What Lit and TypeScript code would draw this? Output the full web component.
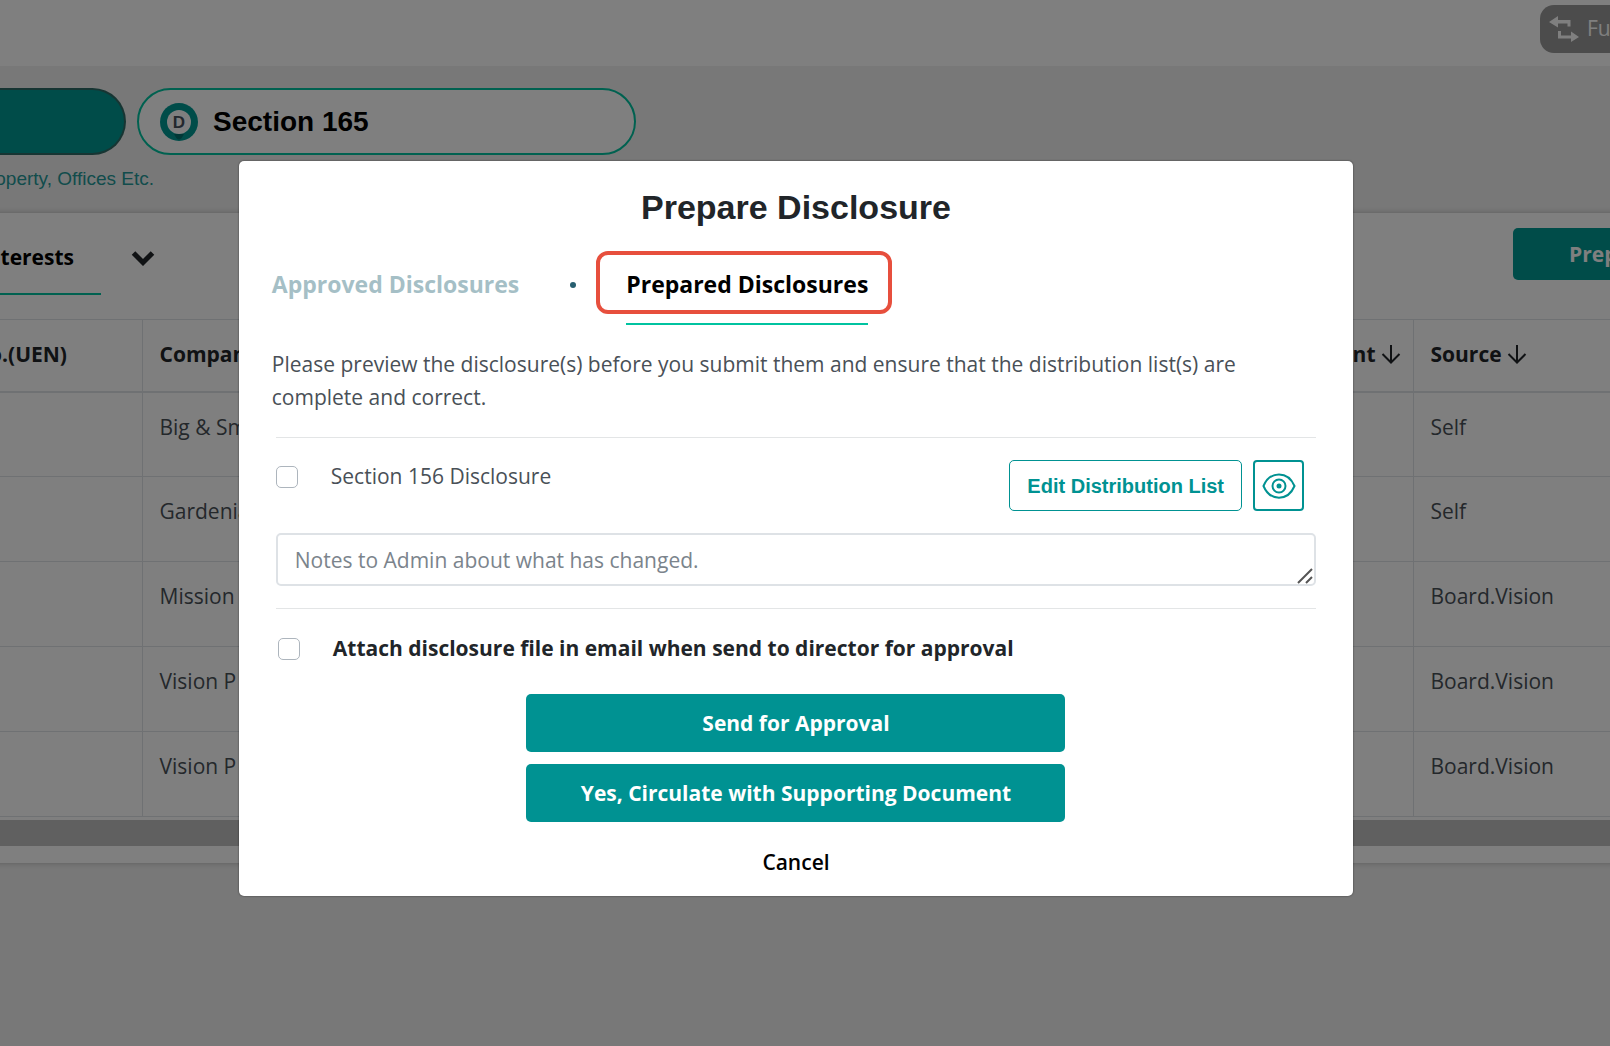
import { LitElement, html, css, svg } from "lit";
import { customElement } from "lit/decorators.js";

interface Row {
  company: string;
  source: string;
}

const ROWS: Row[] = [
  { company: "Big & Small", source: "Self" },
  { company: "Gardenia", source: "Self" },
  { company: "Mission", source: "Board.Vision" },
  { company: "Vision P", source: "Board.Vision" },
  { company: "Vision P", source: "Board.Vision" },
];

const sortArrow = svg`<svg class="sort" viewBox="0 0 20 20" width="20" height="20" aria-hidden="true">
  <path d="M10 1V18.500M1.500 10L10 18.500L18.500 10" fill="none" stroke="currentColor" stroke-width="2"/>
</svg>`;

@customElement("disclosure-page")
class DisclosurePage extends LitElement {
  static styles = css`
    :host {
      display: flex;
      flex-direction: column;
      min-height: 100vh;
      overflow: hidden;
      background: #f1f1f1;
      color: #212529;
      font: 21px/32px "Open Sans", "Noto Sans", sans-serif;
    }
    button {
      font: inherit;
      cursor: pointer;
    }
    .topbar {
      display: flex;
      justify-content: flex-end;
      height: 66px;
      box-sizing: border-box;
      padding-top: 5px;
      background: #fff;
    }
    .switch {
      display: flex;
      align-items: center;
      gap: 7px;
      box-sizing: border-box;
      flex: none;
      width: 140px;
      height: 48px;
      margin-right: -70px;
      padding: 0 0 0 8px;
      border: 0;
      border-radius: 14px;
      background: #989898;
      color: #fff;
      white-space: nowrap;
    }
    .switch span {
      padding-bottom: 2px;
    }
    .sections {
      display: flex;
      gap: 11px;
      padding-top: 22px;
    }
    .pill {
      display: flex;
      align-items: center;
      box-sizing: border-box;
      height: 67px;
      border: 2px solid #00c3a0;
      border-radius: 34px;
      background: #fff;
      color: #000;
      font: bold 28px/32px "Liberation Sans", Arial, sans-serif;
    }
    .pill.current {
      width: 126px;
      border-color: #2f6b66;
      border-left: 0;
      border-radius: 0 34px 34px 0;
      background: #009893;
    }
    .pill.other {
      width: 499px;
      gap: 15px;
      padding: 0 21px;
    }
    .caption {
      display: flex;
      justify-content: flex-end;
      width: 154px;
      margin: 12px 0 0;
      color: #249998;
      font: 19px/24px "Liberation Sans", Arial, sans-serif;
      white-space: nowrap;
    }
    .card {
      margin: 22px -8px 0;
      padding: 0 8px;
      background: #fff;
      box-shadow: 0 0 6px rgba(0, 0, 0, 0.25);
    }
    .cardhead {
      display: flex;
      align-items: flex-start;
      justify-content: space-between;
      height: 106px;
    }
    .views {
      display: flex;
      gap: 30px;
      color: #000;
      font-weight: 700;
    }
    .view {
      display: flex;
      justify-content: flex-end;
      box-sizing: border-box;
      width: 101px;
      height: 82px;
      padding: 28px 27px 0 0;
      border-bottom: 2px solid #00c3a0;
    }
    .more {
      display: block;
      padding: 37px 0 0;
      border: 0;
      background: none;
      height: 53px;
      line-height: 0;
      color: #212529;
    }
    .prepare {
      flex: none;
      width: 180px;
      height: 52px;
      margin: 15px -83px 0 0;
      padding: 0 0 0 56px;
      border: 0;
      border-radius: 5px;
      background: #009893;
      color: #fff;
      font-weight: 700;
      text-align: left;
    }
    table {
      width: 100%;
      table-layout: fixed;
      border-collapse: collapse;
    }
    th,
    td {
      box-sizing: border-box;
      height: 85px;
      padding: 18px 17px 0;
      border: 1px solid #dee2e6;
      color: #495057;
      font-weight: 400;
      text-align: left;
      vertical-align: top;
      white-space: nowrap;
      overflow: hidden;
    }
    th {
      height: 72px;
      border-bottom-width: 2px;
      font-weight: 700;
      color: #212529;
    }
    th:first-child,
    td:first-child {
      border-left: 0;
    }
    th:last-child,
    td:last-child {
      border-right: 0;
    }
    .uen {
      width: 142px;
    }
    .appoint {
      width: 210px;
    }
    .source {
      width: 197px;
    }
    .uenlabel {
      display: flex;
      justify-content: flex-end;
      width: 50px;
    }
    .right {
      text-align: right;
      padding-right: 12px;
    }
    .sort {
      vertical-align: -2px;
      margin-left: 5px;
    }
    .scroller {
      height: 26px;
      margin: 3px -8px 0;
      background: #c1c1c1;
    }
    .cardfoot {
      height: 17px;
    }
  `;

  render() {
    return html`
      <header class="topbar">
        <button class="switch">
          <svg viewBox="0 0 32 28" width="32" height="28" aria-hidden="true">
            <path d="M1 7L10 1V5H22.500V11.500H19.500V8.500H10V12.500Z" fill="currentColor" />
            <path d="M10 16H13V20.500H23V16.500L31 22L23 27V23.500H10Z" fill="currentColor" />
          </svg>
          <span>Full view</span>
        </button>
      </header>
      <nav class="sections" aria-label="Sections">
        <button class="pill current" aria-label="Section 156"></button>
        <button class="pill other">
          <svg viewBox="0 0 38 38" width="38" height="38" aria-hidden="true">
            <circle cx="19" cy="19" r="19" fill="#009893" />
            <path d="M14 31Q19 42 24 31Z" fill="#00716d" />
            <circle cx="19" cy="19" r="12" fill="#fff" />
            <text x="19" y="25" text-anchor="middle" font-size="17" fill="#47505c">D</text>
          </svg>
          Section 165
        </button>
      </nav>
      <p class="caption">Property, Offices Etc.</p>
      <section class="card">
        <div class="cardhead">
          <div class="views">
            <span class="view">Interests</span>
            <button class="more" aria-label="More views">
              <svg viewBox="0 0 24 16" width="24" height="16">
                <path d="M2.500 3L12 12.500L21.500 3" fill="none" stroke="currentColor" stroke-width="5" />
              </svg>
            </button>
          </div>
          <button class="prepare">Prepare</button>
        </div>
        <table>
          <thead>
            <tr>
              <th class="uen"><span class="uenlabel">No.(UEN)</span></th>
              <th>Company</th>
              <th class="appoint right">Appointment${sortArrow}</th>
              <th class="source">Source${sortArrow}</th>
            </tr>
          </thead>
          <tbody>
            ${ROWS.map(
              (r) => html`<tr>
                <td></td>
                <td>${r.company}</td>
                <td></td>
                <td>${r.source}</td>
              </tr>`
            )}
          </tbody>
        </table>
        <div class="scroller"></div>
        <div class="cardfoot"></div>
      </section>
    `;
  }
}

@customElement("prepare-dialog")
class PrepareDialog extends LitElement {
  static styles = css`
    :host {
      display: block;
      box-sizing: border-box;
      width: 70%;
      padding: 24px 37px 6px;
      border-radius: 5px;
      background: #fff;
      box-shadow: 0 0 2px rgba(0, 0, 0, 0.6);
      color: #212529;
      font: 21px/33px "Open Sans", "Noto Sans", sans-serif;
    }
    button {
      font: inherit;
      cursor: pointer;
    }
    h1 {
      margin: 0;
      font: bold 34px/44px "Liberation Sans", Arial, sans-serif;
      text-align: center;
    }
    .tabs {
      display: flex;
      align-items: center;
      margin: 39px -4px 0;
    }
    .tab {
      position: relative;
      padding: 0;
      border: 0;
      background: none;
      color: #a5bfc6;
      font-weight: 700;
      font-size: 23px;
    }
    .tab.active {
      color: #000;
    }
    .tab.active::before {
      content: "";
      position: absolute;
      inset: -17px -24px -13px -30px;
      border: 4px solid #e74f3d;
      border-radius: 12px;
    }
    .tab.active::after {
      content: "";
      position: absolute;
      inset: auto 0 -24px 0;
      height: 2px;
      background: #00c3a0;
    }
    .dot {
      width: 6px;
      height: 6px;
      margin: 0 50px 0 51px;
      border-radius: 50%;
      background: #275f70;
    }
    .intro {
      margin: 47px -4px 0;
      color: #495057;
    }
    hr {
      margin: 23px 0 0;
      border: 0;
      border-top: 1px solid #e3e5e6;
    }
    .item {
      display: flex;
      align-items: flex-start;
      padding: 22px 12px 0 0;
    }
    .check {
      display: flex;
      align-items: center;
      gap: 33px;
      flex: 1;
      color: #495057;
    }
    .check input {
      appearance: none;
      flex: none;
      width: 22px;
      height: 22px;
      margin: 0;
      border: 1px solid #adb5bd;
      border-radius: 5px;
      background: #fff;
    }
    .attach {
      padding: 23px 2px 0;
      color: #212529;
      font-weight: 700;
    }
    .edit {
      width: 233px;
      height: 51px;
      padding: 0;
      border: 1px solid #009292;
      border-radius: 5px;
      background: #fff;
      color: #009292;
      font: bold 20px/24px "Liberation Sans", Arial, sans-serif;
    }
    .eye {
      display: grid;
      place-items: center;
      width: 51px;
      height: 51px;
      margin-left: 11px;
      padding: 0;
      border: 2px solid #009292;
      border-radius: 4px;
      background: #fff;
    }
    textarea {
      display: block;
      box-sizing: border-box;
      width: 100%;
      height: 53px;
      margin-top: 22px;
      padding: 9px 17px;
      border: 2px solid #dee2e6;
      border-radius: 5px;
      font: inherit;
      overflow: hidden;
      resize: none;
    }
    textarea::placeholder {
      color: #7b848c;
    }
    .notes {
      display: grid;
    }
    .notes > * {
      grid-area: 1 / 1;
    }
    .grip {
      place-self: end;
      margin: 0 3px 2px 0;
      z-index: 1;
    }
    .notes + hr {
      margin-top: 22px;
    }
    .actions {
      display: flex;
      flex-direction: column;
      align-items: center;
      gap: 12px;
      padding-top: 29px;
    }
    .primary {
      width: 539px;
      max-width: 100%;
      height: 58px;
      border: 0;
      border-radius: 5px;
      background: #009292;
      color: #fff;
      font-weight: 700;
    }
    .cancel {
      height: 56px;
      padding: 0 20px;
      border: 0;
      background: none;
      color: #000;
      font-weight: 600;
    }
  `;

  render() {
    return html`
      <h1>Prepare Disclosure</h1>
      <div class="tabs">
        <button class="tab">Approved Disclosures</button>
        <span class="dot"></span>
        <button class="tab active">Prepared Disclosures</button>
      </div>
      <p class="intro">
        Please preview the disclosure(s) before you submit them and ensure that the distribution list(s) are
        complete and correct.
      </p>
      <hr />
      <div class="item">
        <label class="check"><input type="checkbox" />Section 156 Disclosure</label>
        <button class="edit">Edit Distribution List</button>
        <button class="eye" aria-label="Preview disclosure">
          <svg viewBox="0 0 34 26" width="34" height="26" fill="none" stroke="#009292" stroke-width="2">
            <path d="M1.500 13C8 -2.500 26 -2.500 32.500 13C26 28.500 8 28.500 1.500 13Z" />
            <circle cx="17" cy="13" r="6.500" />
            <circle cx="17" cy="13" r="2.500" fill="#009292" stroke="none" />
          </svg>
        </button>
      </div>
      <div class="notes">
        <textarea aria-label="Notes to Admin" placeholder="Notes to Admin about what has changed."></textarea>
        <svg class="grip" viewBox="0 0 16 16" width="16" height="16" aria-hidden="true">
          <path d="M1 15L15 1M9 15L15 9" stroke="#555" stroke-width="2" />
        </svg>
      </div>
      <hr />
      <label class="check attach"
        ><input type="checkbox" />Attach disclosure file in email when send to director for approval</label
      >
      <div class="actions">
        <button class="primary">Send for Approval</button>
        <button class="primary">Yes, Circulate with Supporting Document</button>
        <button class="cancel">Cancel</button>
      </div>
    `;
  }
}

@customElement("app-root")
class AppRoot extends LitElement {
  static styles = css`
    :host {
      display: block;
      position: relative;
      overflow: hidden;
    }
    .overlay {
      position: absolute;
      inset: 0;
      display: flex;
      align-items: flex-start;
      justify-content: center;
      padding: 161px 18px 0 0;
      background: rgba(0, 0, 0, 0.5);
    }
  `;

  render() {
    return html`
      <disclosure-page></disclosure-page>
      <div class="overlay">
        <prepare-dialog role="dialog" aria-modal="true" aria-label="Prepare Disclosure"></prepare-dialog>
      </div>
    `;
  }
}
